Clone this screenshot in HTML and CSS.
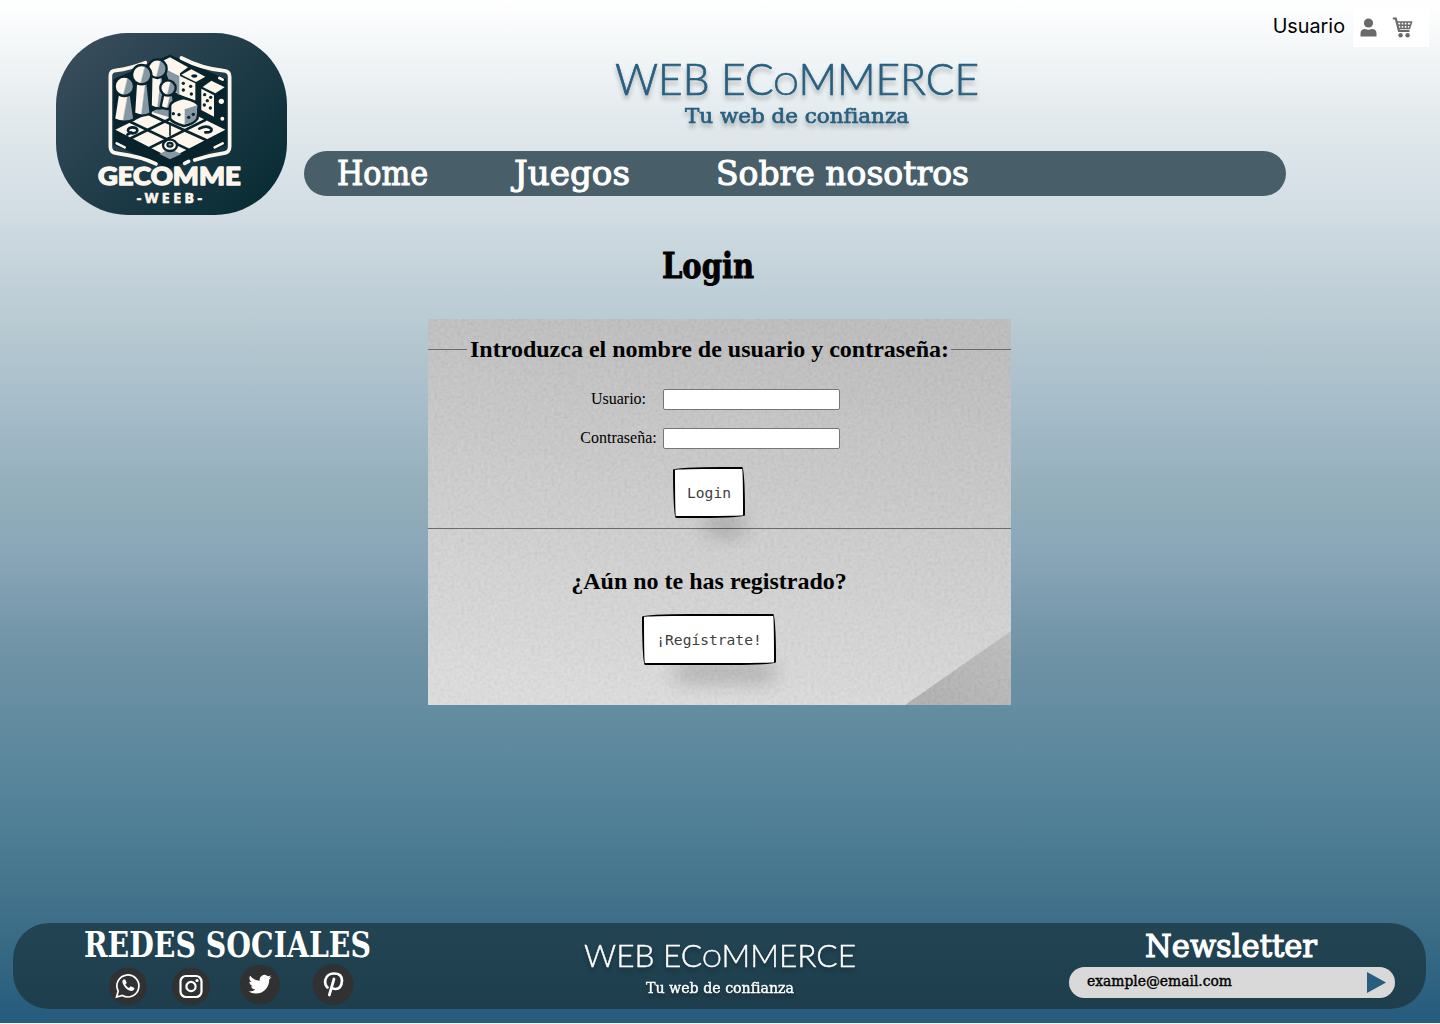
FILE: index.html
```
<!DOCTYPE html>
<html lang="es">
<head>
<meta charset="utf-8">
<title>Web Ecommerce - Login</title>
<link rel="stylesheet" href="styles.css">
</head>
<body>
<div class="page">
  <header class="header">
    <svg class="logo" viewBox="56 33 231 182" role="img" aria-label="Gecomme Weeb">
      <defs>
        <linearGradient id="logoBg" x1="0" y1="0" x2="1" y2="0.8">
          <stop offset="0" stop-color="#3d505f"/><stop offset=".5" stop-color="#223e4b"/><stop offset="1" stop-color="#082c34"/>
        </linearGradient>
        <linearGradient id="pawn" x1="0" y1="0" x2="1" y2=".25">
          <stop offset=".6" stop-color="#fdf6ec"/><stop offset=".68" stop-color="#8798a5"/>
        </linearGradient>
      </defs>
      <rect x="56" y="33" width="231" height="182" rx="72" fill="url(#logoBg)"/>
      <g transform="translate(92 48) scale(.33333)" stroke-linejoin="round" stroke-linecap="round">
        <path d="M64 94L234 20L404 94V290L234 362L64 290Z" fill="#08232c"/>
        <path d="M192 348Q150 326 76 316Q55 314 55 296V84Q55 68 72 67Q112 62 160 44M268 30Q330 62 394 68Q413 69 413 86V296Q413 314 392 316Q350 322 308 336M290 340L278 346" fill="none" stroke="#fdf6ec" stroke-width="11"/>
        <path d="M74 286L98 298M368 298L392 286" fill="none" stroke="#fdf6ec" stroke-width="8"/>
        <path d="M206 42L234 28L288 58L264 76V140L244 130V100Z" fill="#fdf6ec"/>
        <path d="M218 62L262 84V142L238 118Z" fill="#8798a5"/>
        <path d="M264 84L310 106V158L264 140Z" fill="#fdf6ec"/>
        <path d="M268 80L298 64L340 86L312 102Z" fill="#fdf6ec"/>
        <path d="M328 122L366 142V206L328 186Z" fill="#fdf6ec"/>
        <path d="M332 117L358 98L398 118L370 136Z" fill="#fdf6ec"/>
        <g fill="#08232c"><circle cx="274" cy="106" r="5"/><circle cx="296" cy="115" r="5"/><circle cx="274" cy="126" r="5"/><circle cx="298" cy="138" r="5"/><ellipse cx="307" cy="84" rx="9" ry="5"/><circle cx="338" cy="140" r="5"/><circle cx="356" cy="148" r="5"/><circle cx="346" cy="158" r="5"/><circle cx="337" cy="171" r="5"/><circle cx="355" cy="180" r="5"/></g>
        <circle cx="388" cy="160" r="8" fill="#fdf6ec"/><circle cx="391" cy="212" r="6" fill="#fdf6ec"/><path d="M382 90L392 95" stroke="#fdf6ec" stroke-width="8"/>
        <path d="M70 245L236 164L400 245L236 330Z" fill="#fdf6ec"/>
        <path d="M236 164L320 205L280 222L180 192Z" fill="#8798a5"/>
        <path d="M116 222L288 304M168 197L342 276M118 270L284 188M174 299L340 216" stroke="#08232c" stroke-width="8"/>
        <path d="M234 230V262" stroke="#08232c" stroke-width="5"/>
        <path d="M70 250L234 334V362L70 274ZM400 250L234 334V362L400 274Z" fill="#08232c"/>
        <path d="M234 302L268 318L234 334L202 318Z" fill="#8798a5"/>
        <ellipse cx="122" cy="247" rx="14" ry="9" fill="#fdf6ec" stroke="#08232c" stroke-width="8"/><path d="M106 260L118 253" stroke="#08232c" stroke-width="8"/>
        <ellipse cx="234" cy="292" rx="21" ry="17" fill="#fdf6ec" stroke="#08232c" stroke-width="7"/><ellipse cx="234" cy="290" rx="8" ry="6" fill="#8798a5" stroke="#08232c" stroke-width="6"/>
        <path d="M322 242Q344 230 358 242Q362 254 340 253" fill="none" stroke="#08232c" stroke-width="8"/>
        <g stroke="#08232c" stroke-width="7" fill="url(#pawn)">
          <path d="M178 84H212L222 176Q198 188 176 174Z"/><circle cx="196" cy="62" r="28"/>
          <path d="M132 102H166L176 196Q150 210 126 196Z"/><circle cx="149" cy="80" r="29"/>
          <path d="M78 136H116L127 214Q98 228 66 214Z"/><circle cx="97" cy="115" r="29"/>
          <path d="M214 138H242L248 176Q224 190 206 176Z"/><circle cx="228" cy="120" r="23"/>
        </g>
        <path d="M234 174Q234 160 274 150Q318 160 320 174L316 212Q304 228 276 234Q242 224 234 212Z" fill="#fdf6ec" stroke="#08232c" stroke-width="8"/>
        <path d="M278 184L316 172L312 212Q300 226 278 228Z" fill="#8798a5"/>
        <g fill="#08232c"><circle cx="244" cy="197" r="5"/><circle cx="261" cy="200" r="5"/><circle cx="290" cy="208" r="5"/><circle cx="304" cy="199" r="5"/></g>
        <text class="logo-name" x="18" y="412" textLength="428" lengthAdjust="spacingAndGlyphs">GECOMME</text>
        <text class="logo-sub" x="134" y="464" textLength="196" lengthAdjust="spacing">-WEEB-</text>
      </g>
    </svg>
    <div class="header-main">
      <div class="userbar">
        <span class="user-name">Usuario</span>
        <div class="user-icons">
          <svg width="17" height="19" viewBox="0 0 17 19"><circle cx="8.500" cy="5" r="4.600" fill="#6a6a6a"/><path d="M.5 18.400V15.500Q.5 11 5 11Q8.500 12.600 12 11Q16.500 11 16.500 15.500V18.400Z" fill="#6a6a6a"/></svg>
          <svg width="21" height="21" viewBox="0 0 21 21" fill="none" stroke="#6a6a6a"><path d="M.8 1.500H3.800L7 14H17.500" stroke-width="2.200"/><path d="M5 5H19.500L17.500 11.500H6.500M5.500 8.200H18.500M9 5V11.500M12 5V11.500M15.200 5V11.500" stroke-width="1.500"/><g fill="#6a6a6a" stroke="none"><circle cx="8.600" cy="18.300" r="2.200"/><circle cx="15.600" cy="18.300" r="2.200"/></g></svg>
        </div>
      </div>
      <svg class="brand" viewBox="0 0 364 78">
        <text class="hand hand-lg" x="0" y="40" textLength="364" lengthAdjust="spacingAndGlyphs">WEB EC<tspan class="small-o">O</tspan>MMERCE</text>
        <text class="quest tag-lg" x="70" y="68" textLength="224" lengthAdjust="spacingAndGlyphs">Tu web de confianza</text>
      </svg>
      <nav class="nav">
        <a><svg width="91" height="45"><text class="quest nav-text" x="0" y="34" textLength="91" lengthAdjust="spacingAndGlyphs">Home</text></svg></a>
        <a><svg width="116" height="45"><text class="quest nav-text" x="0" y="34" textLength="116" lengthAdjust="spacingAndGlyphs">Juegos</text></svg></a>
        <a><svg width="253" height="45"><text class="quest nav-text" x="0" y="34" textLength="253" lengthAdjust="spacingAndGlyphs">Sobre nosotros</text></svg></a>
      </nav>
    </div>
  </header>

  <main class="main">
    <h1 class="title"><svg width="92" height="40"><text class="quest title-text" x="0" y="29" textLength="92" lengthAdjust="spacingAndGlyphs">Login</text></svg></h1>
    <section class="panel">
      <svg class="panel-bg" viewBox="0 0 583 386">
        <defs>
          <linearGradient id="paper" x1=".6" y1="0" x2=".4" y2="1"><stop offset="0" stop-color="#bdbdbd"/><stop offset="1" stop-color="#dedede"/></linearGradient>
          <linearGradient id="fold" x1="0" y1="1" x2="1" y2="0"><stop offset="0" stop-color="#aeaeae"/><stop offset="1" stop-color="#bebebe"/></linearGradient>
          <filter id="grain" x="0" y="0" width="100%" height="100%"><feTurbulence type="fractalNoise" baseFrequency=".3" numOctaves="2" seed="4"/><feColorMatrix values="1 0 0 0 0  1 0 0 0 0  1 0 0 0 0  0 0 0 0 .11"/></filter>
        </defs>
        <rect width="583" height="386" fill="url(#paper)"/>
        <path d="M477 386L583 312V386Z" fill="url(#fold)"/>
        <rect width="583" height="386" filter="url(#grain)"/>
      </svg>
      <form class="login">
        <div class="legend"><span class="legend-text">Introduzca el nombre de usuario y contraseña:</span></div>
        <label class="field"><span class="label">Usuario:</span><input type="text"></label>
        <label class="field"><span class="label">Contraseña:</span><input type="password"></label>
        <button class="btn btn-login" type="button">Login</button>
      </form>
      <div class="register">
        <h2 class="question">¿Aún no te has registrado?</h2>
        <button class="btn btn-register" type="button">¡Regístrate!</button>
      </div>
    </section>
  </main>

  <footer class="footer">
    <div class="social">
      <svg width="287" height="40"><text class="quest social-text" x="0" y="34" textLength="287" lengthAdjust="spacingAndGlyphs">REDES SOCIALES</text></svg>
      <div class="social-icons">
        <svg width="40" height="40" viewBox="-20 -21.500 40 40"><circle cy="1" r="19" fill="#303132"/><g fill="none" stroke="#fff" stroke-width="1.700"><path d="M-11.500 11.500L-9.800 5.600A11 11 0 1 1-5.700 9.900Z"/></g><path d="M-4.500-6Q-6.500-4.500-5-1.500Q-2 4.500 3 5.500Q6 5.500 6.500 2.500L2.700.7L1 2.500Q-1.300 1.500-2.700-1L-1.300-2.600L-2.700-6Z" fill="#fff"/></svg>
        <svg width="40" height="40" viewBox="-20 -21.500 40 40"><circle cy="1" r="19" fill="#303132"/><g fill="none" stroke="#fff" stroke-width="2.200"><rect x="-10.500" y="-9.500" width="21" height="21" rx="5.500"/><circle cy="1" r="4.600"/></g><circle cx="6" cy="-5" r="1.600" fill="#fff"/></svg>
        <svg width="42" height="42" viewBox="-21 -21.500 42 42"><circle r="20" fill="#303132"/><path transform="translate(-11.500 -11.800) scale(.96)" fill="#fff" d="M23.953 4.570a10 10 0 0 1-2.825.775 4.958 4.958 0 0 0 2.163-2.723c-.951.555-2.005.959-3.127 1.184a4.920 4.920 0 0 0-8.384 4.482C7.690 8.095 4.067 6.130 1.640 3.162a4.822 4.822 0 0 0-.666 2.475c0 1.710.870 3.213 2.188 4.096a4.904 4.904 0 0 1-2.228-.616v.060a4.923 4.923 0 0 0 3.946 4.827 4.996 4.996 0 0 1-2.212.085 4.936 4.936 0 0 0 4.604 3.417 9.867 9.867 0 0 1-6.102 2.105c-.390 0-.779-.023-1.170-.067a13.995 13.995 0 0 0 7.557 2.209c9.053 0 13.998-7.496 13.998-13.985 0-.210 0-.420-.015-.630A9.935 9.935 0 0 0 24 4.590z"/></svg>
        <svg width="42" height="42" viewBox="-21 -21.500 42 42"><circle r="20.500" fill="#303132"/><path d="M-5.500 3Q-8.500 0-7.700-4.500Q-6-11 1-11Q9-11 9-4Q8.500 4.500 2.500 4.500Q-.5 4.500-1.500 2.500M1-5.500L-3.700 10.500" fill="none" stroke="#fff" stroke-width="2.700" stroke-linecap="round"/></svg>
      </div>
    </div>
    <svg class="footer-brand" viewBox="0 0 272 60">
      <text class="hand hand-sm" x="0" y="27" textLength="272" lengthAdjust="spacingAndGlyphs">WEB EC<tspan class="small-o">O</tspan>MMERCE</text>
      <text class="quest tag-sm" x="62" y="53" textLength="148" lengthAdjust="spacingAndGlyphs">Tu web de confianza</text>
    </svg>
    <div class="news">
      <svg width="172" height="43"><text class="quest news-text" x="0" y="34" textLength="172" lengthAdjust="spacingAndGlyphs">Newsletter</text></svg>
      <div class="email">
        <svg width="145" height="31"><text class="quest email-text" x="0" y="19" textLength="145" lengthAdjust="spacingAndGlyphs">example@email.com</text></svg>
        <svg width="19" height="21"><path d="M0 0L19 10.500L0 21Z" fill="#275d7d"/></svg>
      </div>
    </div>
  </footer>
</div>
</body>
</html>
```
FILE: styles.css
```
* { box-sizing: border-box; }
body { margin: 0; background: #f4f6f7; overflow: hidden; }
svg { display: block; overflow: visible; flex: none; }
.page {
  width: 1440px; height: 1023px;
  display: flex; flex-direction: column;
  background: linear-gradient(#fff 0, #e0e8eb 130px, #d4dee5 200px, #b9cbd3 320px, #a3bac8 420px, #93afbb 490px, #8aa7b9 550px, #7093a6 650px, #548399 800px, #3e6f88 920px, #265c7d 1016px);
}
.quest { font-family: "DejaVu Serif", serif; font-weight: 400; }
.hand { font-family: Lato, sans-serif; font-weight: 300; }

.header { display: flex; gap: 17px; padding-left: 56px; height: 215px; }
.logo { width: 231px; height: 182px; margin-top: 33px; }
.logo-name { font: 900 72px Lato, sans-serif; fill: #fdf6ec; stroke: #fdf6ec; stroke-width: 4px; }
.logo-sub { font: 700 42px "Open Sans", sans-serif; fill: #fdf6ec; stroke: #fdf6ec; stroke-width: 2px; }
.header-main { flex: 1; display: flex; flex-direction: column; }
.userbar { height: 47px; padding: 7px 11px 0 0; display: flex; justify-content: flex-end; gap: 8px; }
.user-name { font: 400 19.8px/38px Inter, sans-serif; }
.user-icons { width: 76px; height: 40px; padding: 0 0 0 7px; background: #fff; display: flex; align-items: center; gap: 15px; }
.brand { width: 364px; height: 78px; margin: 8px 0 18px 311px; }
.brand text { fill: #275f80; stroke: #275f80; stroke-width: .7px; filter: drop-shadow(0 4px 2px rgba(0, 0, 0, .25)); }
.hand-lg { font-size: 43px; }
.hand-lg .small-o { font-size: 32px; }
.tag-lg { font-size: 21px; }
.nav { width: 982px; height: 45px; border-radius: 23px; background: #485e68; padding-left: 33px; display: flex; gap: 86px; }
.nav-text { font-size: 33px; fill: #fff; stroke: #fff; stroke-width: 1.1px; }

.main { flex: 1; display: flex; flex-direction: column; }
.title { margin: 34px 0 30px 662px; height: 40px; }
.title-text { font-size: 36px; font-weight: 700; stroke: #000; stroke-width: 1px; }
.panel { position: relative; width: 583px; height: 386px; margin-left: 428px; font-family: "Liberation Serif", serif; color: #000; }
.panel-bg { position: absolute; inset: 0; width: 583px; height: 386px; }
.login { position: relative; height: 210px; padding-top: 15px; border-bottom: 1px solid #6b6b6b; display: flex; flex-direction: column; align-items: center; }
.legend { width: 100%; height: 30px; display: flex; align-items: center; gap: 3px; margin-bottom: 25px; }
.legend::before, .legend::after { content: ""; height: 1px; background: #6b6b6b; }
.legend::before { width: 39px; }
.legend::after { flex: 1; }
.legend-text { width: 478px; font-size: 24px; font-weight: 700; line-height: 30px; white-space: nowrap; }
.field { width: 260px; height: 21px; margin: 0 19px 18px 0; display: flex; gap: 6px; align-items: center; font-size: 16px; }
.label { width: 77px; padding-bottom: 2px; text-align: center; white-space: nowrap; }
.field input { width: 177px; height: 21px; margin: 0; border: 1px solid #767676; border-radius: 2px; background: #fff; padding: 0; }
.btn {
  height: 51px; padding: 0; margin: 0; background: #fff; color: #41403e;
  border: 2px solid #000; border-radius: 255px 15px 225px 15px / 15px 225px 15px 255px;
  box-shadow: 16px 33px 20px -18px rgba(0, 0, 0, .24);
  font: 14.6px "DejaVu Sans Mono", monospace; white-space: nowrap;
}
.btn-login { width: 72px; margin-right: 21px; }
.btn-register { width: 134px; }
.register { position: relative; padding: 37px 21px 0 0; display: flex; flex-direction: column; align-items: center; }
.question { margin: 0 0 18px; height: 30px; font-size: 24px; line-height: 30px; white-space: nowrap; }

.footer { width: 1413px; height: 86px; margin: 0 0 14px 13px; padding: 0 31px 0 71px; border-radius: 36px; background: linear-gradient(#224453, #1e3e4d); display: flex; justify-content: space-between; }
.social-text { font-size: 35px; font-weight: 700; fill: #fff; }
.social-icons { display: flex; align-items: center; padding-left: 24px; }
.social-icons svg:nth-child(2) { margin-left: 23px; }
.social-icons svg:nth-child(3) { margin-left: 28px; }
.social-icons svg:nth-child(4) { margin-left: 31px; }
.footer-brand { width: 272px; height: 60px; margin-top: 17px; }
.footer-brand text { fill: #fff; stroke: #fff; stroke-width: .4px; filter: drop-shadow(0 3px 2px rgba(0, 0, 0, .3)); }
.hand-sm { font-size: 31px; }
.hand-sm .small-o { font-size: 24px; }
.tag-sm { font-size: 15px; }
.news { width: 326px; }
.news > svg { margin-left: 76px; }
.news-text { font-size: 32px; fill: #fff; stroke: #fff; stroke-width: 1.2px; }
.email { width: 326px; height: 31px; margin-top: 1px; padding: 0 9px 0 18px; border-radius: 16px; background: #d9d9d9; display: flex; justify-content: space-between; align-items: center; }
.email-text { font-size: 14px; stroke: #000; stroke-width: .4px; }
```
